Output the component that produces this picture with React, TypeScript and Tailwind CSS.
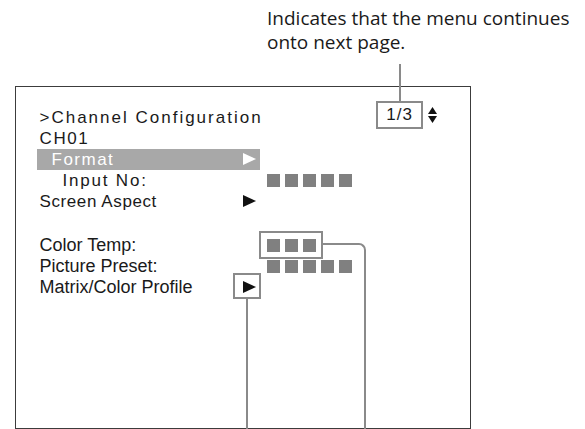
import React from "react";

const Squares = ({ n }: { n: number }) => (
  <div className="flex gap-[5px]">
    {Array.from({ length: n }).map((_, i) => (
      <span key={i} className="block h-[13px] w-[13px] bg-[#808080]" />
    ))}
  </div>
);

const Arrow = ({ color }: { color: string }) => (
  <svg width="13" height="12" viewBox="0 0 13 12" className="shrink-0">
    <polygon points="0,0 13,6 0,12" fill={color} />
  </svg>
);

function MenuRow({
  label,
  indent,
  tracking,
  arrow,
  squares,
  selected,
  size,
}: {
  label: string;
  indent: string;
  tracking: string;
  arrow?: boolean;
  squares?: number;
  selected?: boolean;
  size: string;
}) {
  return (
    <div className="flex h-[21px] items-center">
      <div
        className={`flex h-[21px] w-[223px] items-center justify-between pr-[4px] ${indent} ${
          selected ? "bg-[#a8a8a8] text-white" : "text-[#1a1a1a]"
        }`}
      >
        <span className={`${size} ${tracking} leading-[21px] whitespace-nowrap`}>{label}</span>
        {arrow && <Arrow color={selected ? "#ffffff" : "#111111"} />}
      </div>
      {squares ? (
        <div className="ml-[7px]">
          <Squares n={squares} />
        </div>
      ) : null}
    </div>
  );
}

export default function App() {
  return (
    <div className="relative h-[429px] w-[585px] overflow-hidden bg-white">
      {/* Callout note */}
      <p className="pl-[267px] pt-[6px] font-['Open_Sans',sans-serif] text-[19px] leading-[24px] text-[#1a1a1a]">
        Indicates that the menu continues
        <br />
        onto next page.
      </p>

      {/* Monitor menu */}
      <div className="ml-[15px] mt-[32px] h-[343px] w-[456px] border-[1.5px] border-[#3c3c3c] pl-[20.5px] pt-[19.5px] font-['Liberation_Sans',Arial,sans-serif]">
        <div className="flex h-[21px] items-center pr-[33px] text-[#1a1a1a]">
          <span className="pl-[3px] text-[17px] leading-[21px] tracking-[2px]">&gt;Channel Configuration</span>
          <div className="ml-auto -mt-[6px] flex items-center self-start">
            <span className="flex h-[28px] items-center border-2 border-[#8a8a8a] px-[8px] text-[17px] tracking-[1px]">
              1/3
            </span>
            <svg width="9" height="16" viewBox="0 0 9 16" className="ml-[5px]">
              <polygon points="4.5,0 9,7 0,7" fill="#111" />
              <polygon points="0,9 9,9 4.5,16" fill="#111" />
            </svg>
          </div>
        </div>
        <div className="flex h-[21px] items-center pl-[3px] text-[17px] leading-[21px] tracking-[1.6px] text-[#1a1a1a]">
          CH01
        </div>
        <MenuRow label="Format" indent="pl-[15px]" tracking="tracking-[1.5px]" size="text-[17px]" arrow selected />
        <MenuRow label="Input No:" indent="pl-[26px]" tracking="tracking-[1.8px]" size="text-[17px]" squares={5} />
        <MenuRow label="Screen Aspect" indent="pl-[3px]" tracking="tracking-[0.6px]" size="text-[17px]" arrow />
        <div className="h-[23px]" />
        <MenuRow label="Color Temp:" indent="pl-[3px]" tracking="tracking-normal" size="text-[18px]" squares={3} />
        <MenuRow label="Picture Preset:" indent="pl-[3px]" tracking="tracking-normal" size="text-[18px]" squares={5} />
        <MenuRow label="Matrix/Color Profile" indent="pl-[3px]" tracking="tracking-normal" size="text-[18px]" arrow />
      </div>

      {/* Annotation lines and frames */}
      <div className="absolute left-[399px] top-[64px] h-[38px] w-[2px] bg-[#8a8a8a]" />
      <div className="absolute left-[259px] top-[231px] h-[28px] w-[64px] border-2 border-[#8a8a8a]" />
      <div className="absolute left-[321px] top-[243px] h-[190px] w-[45px] rounded-tr-[7px] border-r-2 border-t-2 border-[#8a8a8a]" />
      <div className="absolute left-[233px] top-[273px] h-[26px] w-[28px] border-2 border-[#8a8a8a]" />
      <div className="absolute left-[246px] top-[299px] h-[131px] w-[2px] bg-[#8a8a8a]" />
    </div>
  );
}
